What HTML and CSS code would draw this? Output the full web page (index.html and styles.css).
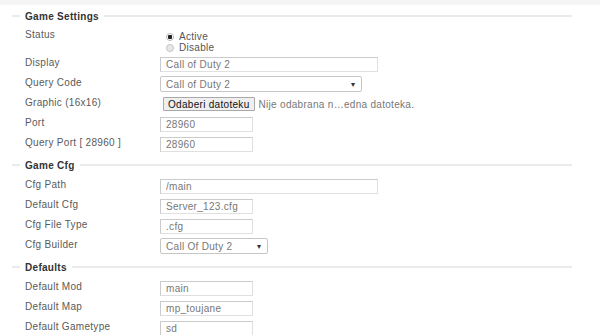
FILE: index.html
```html
<!DOCTYPE html>
<html lang="hr">

<head>
  <meta charset="UTF-8">
  <meta name="viewport" content="width=device-width, initial-scale=1.0">
  <title>Game Settings</title>
  <link rel="stylesheet" href="styles.css">
</head>

<body>
  <div class="topbar"></div>

  <div class="section">
    <div class="heading"><span class="line-left"></span><span class="title">Game Settings</span><span class="line-right"></span></div>

    <div class="row row-status">
      <label class="label">Status</label>
      <div class="radios">
        <label class="radio"><span class="dot checked"></span>Active</label>
        <label class="radio"><span class="dot"></span>Disable</label>
      </div>
    </div>
    <div class="row">
      <label class="label">Display</label>
      <input class="field wide" type="text" value="Call of Duty 2">
    </div>
    <div class="row">
      <label class="label">Query Code</label>
      <div class="select select-wide"><span>Call of Duty 2</span><span class="arrow">&#9662;</span></div>
    </div>
    <div class="row">
      <label class="label">Graphic (16x16)</label>
      <div class="file">
        <button class="file-btn">Odaberi datoteku</button>
        <span class="file-name">Nije odabrana n…edna datoteka.</span>
      </div>
    </div>
    <div class="row">
      <label class="label">Port</label>
      <input class="field short" type="text" value="28960">
    </div>
    <div class="row">
      <label class="label">Query Port [ 28960 ]</label>
      <input class="field short" type="text" value="28960">
    </div>
  </div>

  <div class="section">
    <div class="heading"><span class="line-left"></span><span class="title">Game Cfg</span><span class="line-right"></span></div>

    <div class="row">
      <label class="label">Cfg Path</label>
      <input class="field wide" type="text" value="/main">
    </div>
    <div class="row">
      <label class="label">Default Cfg</label>
      <input class="field short" type="text" value="Server_123.cfg">
    </div>
    <div class="row">
      <label class="label">Cfg File Type</label>
      <input class="field short" type="text" value=".cfg">
    </div>
    <div class="row">
      <label class="label">Cfg Builder</label>
      <div class="select select-short"><span>Call Of Duty 2</span><span class="arrow">&#9662;</span></div>
    </div>
  </div>

  <div class="section">
    <div class="heading"><span class="line-left"></span><span class="title">Defaults</span><span class="line-right"></span></div>

    <div class="row">
      <label class="label">Default Mod</label>
      <input class="field short" type="text" value="main">
    </div>
    <div class="row">
      <label class="label">Default Map</label>
      <input class="field short" type="text" value="mp_toujane">
    </div>
    <div class="row">
      <label class="label">Default Gametype</label>
      <input class="field short" type="text" value="sd">
    </div>
  </div>
</body>

</html>
```

FILE: styles.css
```css
* {
  margin: 0;
  padding: 0;
  box-sizing: border-box;
  font-family: "Liberation Sans", Arial, Helvetica, sans-serif;
}

body {
  width: 600px;
  height: 335px;
  overflow: hidden;
  background: #fff;
  font-size: 10px;
  letter-spacing: 0.3px;
  color: #5a5a5a;
}

.topbar {
  height: 5px;
  background: #f5f5f5;
}

.section {
  padding-left: 12px;
  width: 572px;
}

.heading {
  display: flex;
  align-items: center;
  height: 14px;
  margin-top: 4px;
  margin-bottom: 4px;
}

.section:first-of-type .heading {
  margin-top: 3px;
}

.line-left {
  width: 8px;
  height: 2px;
  background: #ebebeb;
}

.line-right {
  flex: 1;
  height: 2px;
  background: #ebebeb;
}

.title {
  font-weight: bold;
  color: #333;
  padding: 0 5px;
}

.row {
  display: flex;
  align-items: center;
  height: 20px;
}

.row-status {
  height: 27px;
  align-items: flex-start;
}

.label {
  width: 148px;
  padding-left: 13px;
  padding-bottom: 3px;
  flex-shrink: 0;
}

.row-status .label {
  padding-top: 2px;
}

.radios {
  display: flex;
  flex-direction: column;
  padding-top: 4px;
  padding-left: 6px;
}

.radio {
  display: flex;
  align-items: center;
  height: 11px;
  color: #555;
}

.dot {
  display: inline-block;
  width: 8px;
  height: 8px;
  border-radius: 50%;
  border: 1px solid #c4c4c4;
  background: #e8e8e8;
  margin-right: 5px;
}

.dot.checked {
  background: radial-gradient(circle, #222 0 2px, #fff 2.5px);
  border-color: #bbb;
}

.field {
  height: 15px;
  border: 1px solid #e0e0e0;
  border-top-color: #cbcbcb;
  border-left-color: #cbcbcb;
  padding: 0 5px;
  font-size: 10px;
  letter-spacing: 0.3px;
  color: #777;
  background: #fff;
}

.wide {
  width: 218px;
}

.short {
  width: 93px;
}

.select {
  display: flex;
  align-items: center;
  justify-content: space-between;
  height: 16px;
  border: 1px solid #c6c6c6;
  border-radius: 2px;
  padding: 0 6px 0 5px;
  color: #777;
  background: #fff;
}

.select-wide {
  width: 202px;
}

.select-short {
  width: 108px;
}

.arrow {
  font-size: 8px;
  color: #333;
}

.file {
  display: flex;
  align-items: center;
  padding-left: 3px;
}

.file-btn {
  height: 14px;
  padding: 0 4px;
  border: 1px solid #a9a9a9;
  border-radius: 1px;
  background: #efefef;
  font-size: 10px;
  letter-spacing: 0.3px;
  color: #111;
}

.file-name {
  padding-left: 4px;
  color: #777;
}
```
